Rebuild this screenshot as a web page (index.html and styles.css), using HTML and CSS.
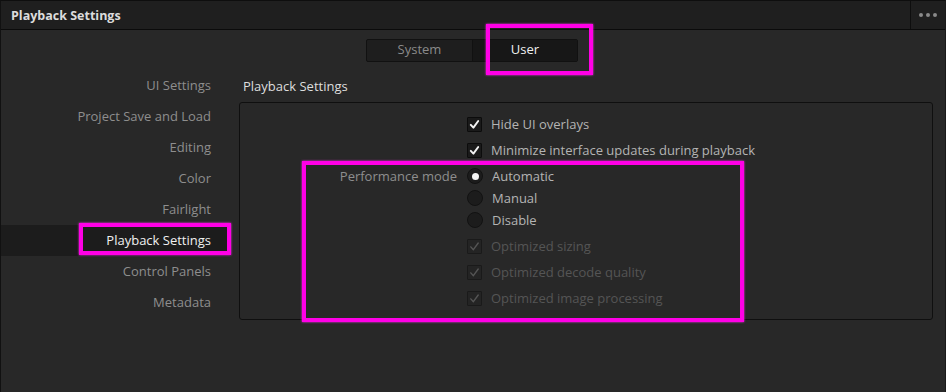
FILE: index.html
```html
<!DOCTYPE html>
<html lang="en">
<head>
    <meta charset="UTF-8">
    <meta name="viewport" content="width=device-width, initial-scale=1.0">
    <title>Playback Settings</title>
    <link rel="stylesheet" href="styles.css">
</head>
<body>
    <div class="window">
        <div class="title-bar">
            <div class="title">Playback Settings</div>
            <div class="menu-btn">
                <span class="dot"></span><span class="dot"></span><span class="dot"></span>
            </div>
        </div>

        <div class="content">
            <div class="tabs-row">
                <div class="tabs">
                    <div class="tab">System</div>
                    <div class="tab active">User</div>
                </div>
            </div>

            <div class="main">
                <div class="sidebar">
                    <div class="nav-item">UI Settings</div>
                    <div class="nav-item">Project Save and Load</div>
                    <div class="nav-item">Editing</div>
                    <div class="nav-item">Color</div>
                    <div class="nav-item">Fairlight</div>
                    <div class="nav-item selected">Playback Settings</div>
                    <div class="nav-item">Control Panels</div>
                    <div class="nav-item">Metadata</div>
                </div>

                <div class="section">
                    <div class="section-title">Playback Settings</div>
                    <div class="panel">
                        <div class="row">
                            <div class="label"></div>
                            <div class="control">
                                <span class="checkbox"><svg viewBox="0 0 14 14"><polyline points="3,7.4 5.8,10.4 11,3.2"/></svg></span>
                                <span class="text">Hide UI overlays</span>
                            </div>
                        </div>
                        <div class="row">
                            <div class="label"></div>
                            <div class="control">
                                <span class="checkbox"><svg viewBox="0 0 14 14"><polyline points="3,7.4 5.8,10.4 11,3.2"/></svg></span>
                                <span class="text">Minimize interface updates during playback</span>
                            </div>
                        </div>
                        <div class="row radio-group">
                            <div class="label">Performance mode</div>
                            <div class="radios">
                                <div class="control radio-row">
                                    <span class="radio on"></span>
                                    <span class="text">Automatic</span>
                                </div>
                                <div class="control radio-row">
                                    <span class="radio"></span>
                                    <span class="text">Manual</span>
                                </div>
                                <div class="control radio-row">
                                    <span class="radio"></span>
                                    <span class="text">Disable</span>
                                </div>
                            </div>
                        </div>
                        <div class="row disabled">
                            <div class="label"></div>
                            <div class="control">
                                <span class="checkbox"><svg viewBox="0 0 14 14"><polyline points="3,7.4 5.8,10.4 11,3.2"/></svg></span>
                                <span class="text">Optimized sizing</span>
                            </div>
                        </div>
                        <div class="row disabled">
                            <div class="label"></div>
                            <div class="control">
                                <span class="checkbox"><svg viewBox="0 0 14 14"><polyline points="3,7.4 5.8,10.4 11,3.2"/></svg></span>
                                <span class="text">Optimized decode quality</span>
                            </div>
                        </div>
                        <div class="row disabled">
                            <div class="label"></div>
                            <div class="control">
                                <span class="checkbox"><svg viewBox="0 0 14 14"><polyline points="3,7.4 5.8,10.4 11,3.2"/></svg></span>
                                <span class="text">Optimized image processing</span>
                            </div>
                        </div>
                    </div>
                </div>
            </div>
        </div>

        <!-- highlight annotations -->
        <div class="highlight hl-user"></div>
        <div class="highlight hl-nav"></div>
        <div class="highlight hl-perf"></div>
    </div>
</body>
</html>
```

FILE: styles.css
```css
* {
    margin: 0;
    padding: 0;
    box-sizing: border-box;
    font-family: "Open Sans", "Noto Sans", sans-serif;
}

body {
    width: 946px;
    height: 392px;
    background: #282828;
    overflow: hidden;
}

.window {
    position: relative;
    width: 946px;
    height: 392px;
    background: #282828;
    border-top: 1px solid #0e0e0e;
    border-left: 1px solid #111;
    border-right: 1px solid #1a1a1a;
    display: flex;
    flex-direction: column;
}

.title-bar {
    height: 29px;
    background: #1f1f1f;
    border-bottom: 1px solid #0b0b0b;
    display: flex;
    align-items: center;
    justify-content: space-between;
    flex-shrink: 0;
}

.title {
    padding-left: 10px;
    font-size: 12.5px;
    font-weight: 700;
    color: #dcdcdc;
}

.menu-btn {
    width: 35px;
    height: 100%;
    border-left: 1px solid #0e0e0e;
    display: flex;
    align-items: center;
    justify-content: center;
    gap: 3px;
    padding-bottom: 1px;
}

.dot {
    width: 4px;
    height: 4px;
    border-radius: 50%;
    background: #8a8a8a;
}

.content {
    flex: 1;
    display: flex;
    flex-direction: column;
}

.tabs-row {
    display: flex;
    justify-content: center;
    padding-top: 9px;
    padding-right: 2px;
}

.tabs {
    display: flex;
    border: 1px solid #111;
    border-radius: 2px;
    background: #1e1e1e;
}

.tab {
    width: 105px;
    height: 21px;
    line-height: 19px;
    text-align: center;
    font-size: 13px;
    color: #8a8a8a;
}

.tab + .tab {
    border-left: 1px solid #111;
}

.tab.active {
    background: #171717;
    color: #f0f0f0;
}

.main {
    display: flex;
    padding-top: 8px;
}

.sidebar {
    width: 230px;
    display: flex;
    flex-direction: column;
}

.nav-item {
    height: 31px;
    line-height: 30px;
    text-align: right;
    padding-right: 20px;
    font-size: 13px;
    color: #8e8e8e;
}

.nav-item.selected {
    background: #1c1c1c;
    color: #f0f0f0;
}

.section {
    margin-left: 8px;
    width: 694px;
}

.section-title {
    height: 32px;
    line-height: 14px;
    padding-left: 4px;
    padding-top: 9px;
    font-size: 13px;
    color: #dedede;
}

.panel {
    border: 1px solid #0f0f0f;
    border-radius: 3px;
    padding: 8px 0;
}

.row {
    display: flex;
    height: 26px;
    align-items: center;
}

.label {
    width: 227px;
    padding-right: 10px;
    text-align: right;
    font-size: 13px;
    color: #8e8e8e;
}

.control {
    display: flex;
    align-items: center;
    gap: 9px;
    font-size: 13px;
    color: #b4b4b4;
}

.checkbox {
    width: 15px;
    height: 15px;
    background: #1a1a1a;
    border: 1px solid #0c0c0c;
    border-radius: 1px;
    display: flex;
    align-items: center;
    justify-content: center;
}

.checkbox svg {
    width: 13px;
    height: 13px;
    fill: none;
    stroke: #f2f2f2;
    stroke-width: 2.1;
    stroke-linecap: round;
    stroke-linejoin: round;
}

.row.radio-group {
    height: auto;
    align-items: flex-start;
    padding: 2px 0;
}

.radio-group .label {
    height: 22px;
    line-height: 22px;
}

.radio-row {
    height: 22px;
}

.radio {
    width: 16px;
    height: 16px;
    border-radius: 50%;
    background: #1c1c1c;
    border: 1px solid #121212;
    display: flex;
    align-items: center;
    justify-content: center;
}

.radio.on::after {
    content: "";
    width: 7px;
    height: 7px;
    border-radius: 50%;
    background: #f4f4f4;
}

.row.disabled .control {
    color: #555;
}

.row.disabled .checkbox {
    background: #242424;
    border-color: #1a1a1a;
}

.row.disabled .checkbox svg {
    stroke: #555;
    stroke-width: 1.5;
}

.highlight {
    position: absolute;
    border: 4px solid #ff00e6;
    box-shadow: 0 0 2px #ff33ee;
}

.hl-user {
    left: 485px;
    top: 23px;
    width: 107px;
    height: 51px;
}

.hl-nav {
    left: 78px;
    top: 222px;
    width: 152px;
    height: 32px;
}

.hl-perf {
    left: 301px;
    top: 160px;
    width: 442px;
    height: 161px;
}
```
